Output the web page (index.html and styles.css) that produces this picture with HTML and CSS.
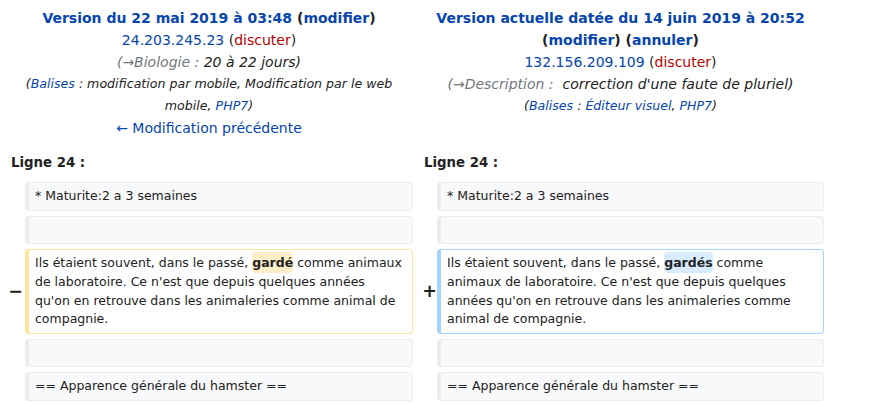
FILE: index.html
```html
<!DOCTYPE html>
<html lang="fr">
<head>
<meta charset="utf-8">
<title>Différence entre versions</title>
<link rel="stylesheet" href="styles.css">
</head>
<body>
<div class="diff">
  <div class="head">
    <div class="line"><strong><a href="#">Version du 22 mai 2019 à 03:48</a> (<a href="#">modifier</a>)</strong></div>
    <div class="line"><a href="#">24.203.245.23</a> (<a class="new" href="#">discuter</a>)</div>
    <div class="line"><i class="comment"><span class="auto">(<a href="#">→Biologie</a> :</span> 20 à 22 jours)</i></div>
    <div class="line tags"><i>(<a href="#">Balises</a> : modification par mobile, Modification par le web mobile, <a href="#">PHP7</a>)</i></div>
    <div class="line"><a href="#">← Modification précédente</a></div>
  </div>
  <div class="head">
    <div class="line"><strong><a href="#">Version actuelle datée du 14 juin 2019 à 20:52</a> (<a href="#">modifier</a>) (<a href="#">annuler</a>)</strong></div>
    <div class="line"><a href="#">132.156.209.109</a> (<a class="new" href="#">discuter</a>)</div>
    <div class="line"><i class="comment"><span class="auto">(<a href="#">→Description</a> :</span>&nbsp; correction d'une faute de pluriel)</i></div>
    <div class="line tags"><i>(<a href="#">Balises</a> : <a href="#">Éditeur visuel</a>, <a href="#">PHP7</a>)</i></div>
  </div>

  <div class="lineno">Ligne 24 :</div>
  <div class="lineno right">Ligne 24 :</div>

  <div class="marker"></div>
  <div class="cell context">* Maturite:2 a 3 semaines</div>
  <div class="marker"></div>
  <div class="cell context">* Maturite:2 a 3 semaines</div>

  <div class="marker"></div>
  <div class="cell context"></div>
  <div class="marker"></div>
  <div class="cell context"></div>

  <div class="marker minus">−</div>
  <div class="cell deleted">Ils étaient souvent, dans le passé, <span class="change">gardé</span> comme animaux<br>de laboratoire. Ce n'est que depuis quelques années<br>qu'on en retrouve dans les animaleries comme animal de<br>compagnie.</div>
  <div class="marker plus">+</div>
  <div class="cell added">Ils étaient souvent, dans le passé, <span class="change">gardés</span> comme<br>animaux de laboratoire. Ce n'est que depuis quelques<br>années qu'on en retrouve dans les animaleries comme<br>animal de compagnie.</div>

  <div class="marker"></div>
  <div class="cell context"></div>
  <div class="marker"></div>
  <div class="cell context"></div>

  <div class="marker"></div>
  <div class="cell context">== Apparence générale du hamster ==</div>
  <div class="marker"></div>
  <div class="cell context">== Apparence générale du hamster ==</div>
</div>
</body>
</html>
```

FILE: styles.css
```css
html, body {
  margin: 0;
  padding: 0;
  background: #ffffff;
}

body {
  font-family: "DejaVu Sans", sans-serif;
  font-size: 14px;
  line-height: 22px;
  color: #222222;
}

a {
  color: #0645ad;
  text-decoration: none;
}

a.new {
  color: #ba0000;
}

.diff {
  display: grid;
  grid-template-columns: 16px 388px 16px 387px;
  column-gap: 4px;
  row-gap: 4.5px;
  margin-left: 5px;
  padding-top: 7px;
  align-items: center;
}

.head {
  grid-column: span 2;
  text-align: center;
  align-self: start;
}

.tags {
  font-size: 12.6px;
}

.comment {
  color: #222222;
}

.auto,
.auto a {
  color: #72777d;
}

.lineno {
  grid-column: span 2;
  font-weight: bold;
  font-size: 13.3px;
  line-height: 21px;
  padding: 8.4px 6px 5px;
}

.lineno.right {
  padding-left: 7px;
}

.marker {
  font-weight: bold;
  font-size: 17.5px;
  line-height: 21px;
  text-align: right;
  color: #222222;
}

.marker.minus {
  margin-right: -2px;
}

.marker.plus {
  margin-right: -4px;
}

.cell {
  box-sizing: border-box;
  min-height: 28.8px;
  font-size: 12.5px;
  line-height: 18.8px;
  padding: 4px 4px 4px 6px;
  border-style: solid;
  border-width: 1px 1px 1px 4px;
  border-radius: 4px;
  align-self: stretch;
  color: #222222;
}

.context {
  background: #f8f9fa;
  border-color: #eaecf0;
}

.deleted {
  background: #ffffff;
  border-color: #ffe49c;
}

.added {
  background: #ffffff;
  border-color: #a3d3ff;
}

.change {
  font-weight: bold;
  border-radius: 4px;
  padding: 3px 0;
}

.deleted .change {
  background: #feeec8;
}

.added .change {
  background: #d8ecff;
}
```
